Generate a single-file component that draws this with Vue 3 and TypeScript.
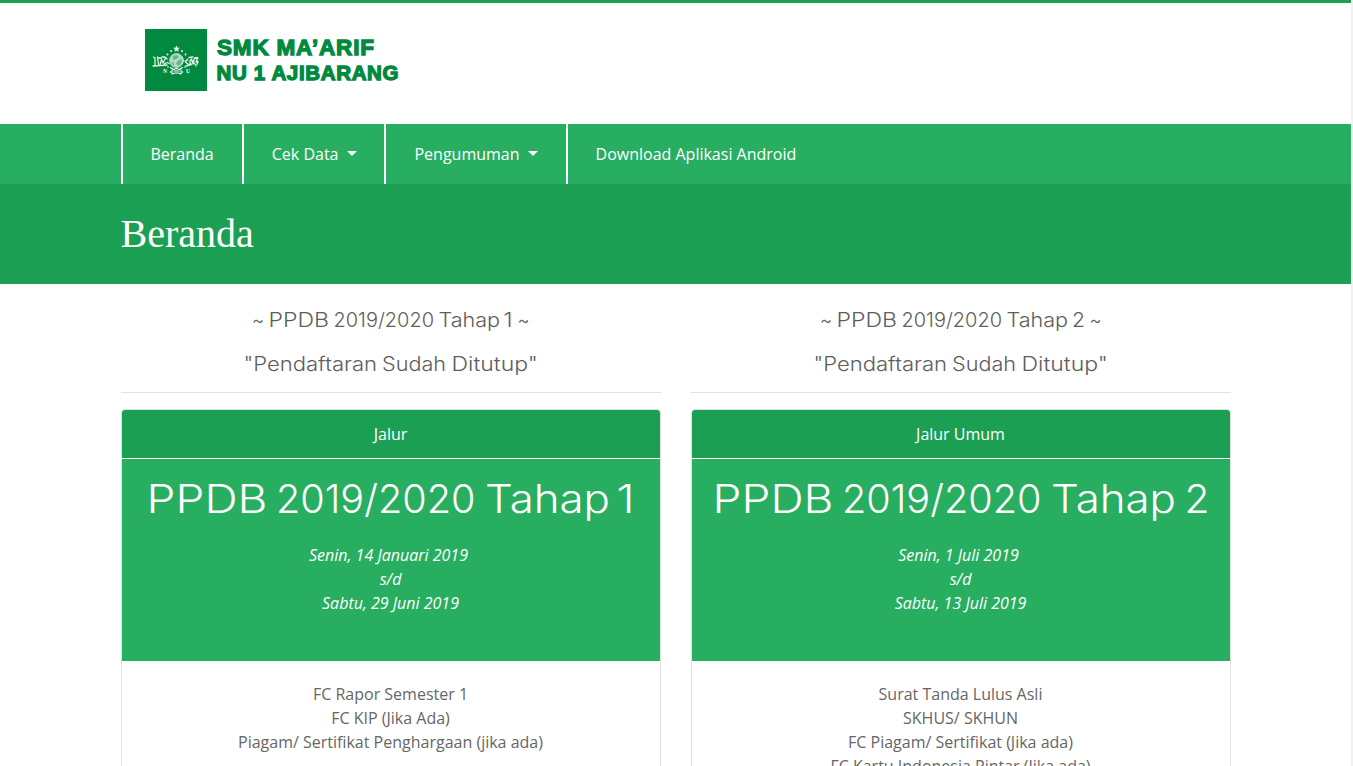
<script setup lang="ts">
interface Word { text: string; x: number; width: number }
interface Track {
  notice: Word[]
  closed: Word[]
  label: string
  title: Word[]
  start: string
  end: string
  requirements: string[]
}

const menu = [
  { label: 'Beranda', dropdown: false },
  { label: 'Cek Data', dropdown: true },
  { label: 'Pengumuman', dropdown: true },
  { label: 'Download Aplikasi Android', dropdown: false },
]

const closed: Word[] = [
  { text: '"Pendaftaran', x: 122.5, width: 133.5 },
  { text: 'Sudah', x: 261, width: 64 },
  { text: 'Ditutup"', x: 330.5, width: 86.5 },
]

const tracks: Track[] = [
  {
    notice: [
      { text: '~', x: 131, width: 12 },
      { text: 'PPDB', x: 147.5, width: 60.5 },
      { text: '2019/2020', x: 212.5, width: 100.5 },
      { text: 'Tahap', x: 317.5, width: 61.5 },
      { text: '1', x: 382.5, width: 9 },
      { text: '~', x: 396.5, width: 12 },
    ],
    closed,
    label: 'Jalur',
    title: [
      { text: 'PPDB', x: 24.5, width: 121 },
      { text: '2019/2020', x: 154, width: 199.5 },
      { text: 'Tahap', x: 363, width: 125 },
      { text: '1', x: 494.5, width: 18 },
    ],
    start: 'Senin, 14 Januari 2019',
    end: 'Sabtu, 29 Juni 2019',
    requirements: ['FC Rapor Semester 1', 'FC KIP (Jika Ada)', 'Piagam/ Sertifikat Penghargaan (jika ada)'],
  },
  {
    notice: [
      { text: '~', x: 129, width: 12 },
      { text: 'PPDB', x: 145.5, width: 60.5 },
      { text: '2019/2020', x: 210.5, width: 100.5 },
      { text: 'Tahap', x: 315.5, width: 61.5 },
      { text: '2', x: 381, width: 13 },
      { text: '~', x: 398.5, width: 12 },
    ],
    closed,
    label: 'Jalur Umum',
    title: [
      { text: 'PPDB', x: 20.5, width: 121 },
      { text: '2019/2020', x: 150, width: 199.5 },
      { text: 'Tahap', x: 359, width: 125 },
      { text: '2', x: 492.5, width: 25 },
    ],
    start: 'Senin, 1 Juli 2019',
    end: 'Sabtu, 13 Juli 2019',
    requirements: ['Surat Tanda Lulus Asli', 'SKHUS/ SKHUN', 'FC Piagam/ Sertifikat (Jika ada)', 'FC Kartu Indonesia Pintar (Jika ada)'],
  },
]
</script>

<template>
  <div class="window">
    <div class="page">
      <header class="masthead">
        <div class="container">
          <svg class="brand" width="300" height="70" viewBox="0 0 300 70">
            <rect width="62" height="62" fill="#00893f" />
            <g fill="#fff">
              <path d="M31.500 16.500l1 2.200 2.300.1-1.800 1.600.6 2.300-2.100-1.300-2.100 1.300.6-2.300-1.800-1.600 2.300-.1z" />
              <circle cx="26" cy="22" r=".9" /><circle cx="37" cy="22" r=".9" />
              <circle cx="22.500" cy="25.500" r=".9" /><circle cx="40.500" cy="25.500" r=".9" />
              <circle cx="23" cy="38" r=".8" /><circle cx="40" cy="38" r=".8" />
              <circle cx="25.500" cy="43" r=".8" /><circle cx="37.500" cy="43" r=".8" />
              <circle cx="31.500" cy="31.500" r="6.500" fill-opacity=".7" />
            </g>
            <g fill="none" stroke="#fff" stroke-linecap="round" stroke-linejoin="round">
              <circle cx="31.500" cy="31.500" r="6.900" stroke-width=".8" />
              <path stroke-width="1.300" stroke-opacity=".88" d="M8.500 28l1.500 1v7l-2 1h4l2-1M12.500 28l1 7M13 29h3l2 5 2.500-5M17 28h3l2 2M16 32l-1 4M19 35l3-1.500 2 1M9 37l13-1M40 32l2.500 3 4 .5-2-3 2-2.500 1.500 5 1.500-6 3 .5-1.500 3.500 2-.5-1 3M41 37l4-1M44 28.500l4-.5M48 32l3 5M51 28.500l2 .5M43 30l-2 2" />
              <path stroke-width="1.100" d="M25.500 38.500l3 2 3-1 3 1 3-2M27 41v4l3-1h3l3 1v-4M29 42h5" />
            </g>
            <path d="M28 27l4-1 2 2-3 2-3 1zM34 31l3-1-1 5-3 2-2-3zM26 33l3 1v3z" fill="#00893f" opacity=".45" />
            <g fill="#fff" font-family="Liberation Serif, serif" font-size="5.500" font-weight="700">
              <text x="18" y="44">N</text><text x="41" y="44">U</text>
            </g>
            <g class="brand-name">
              <text x="72" y="25.500" font-size="22.500" textLength="157" lengthAdjust="spacing">SMK MA’ARIF</text>
              <text x="71.500" y="51" font-size="20.500" textLength="182" lengthAdjust="spacing">NU 1 AJIBARANG</text>
            </g>
          </svg>
        </div>
      </header>
      <nav class="menu">
        <div class="container menu-items">
          <a v-for="item in menu" :key="item.label" class="menu-link">
            {{ item.label }}<span v-if="item.dropdown" class="caret"></span>
          </a>
        </div>
      </nav>
      <section class="banner"><div class="container"><h1>Beranda</h1></div></section>
      <main class="container tracks">
        <section v-for="track in tracks" :key="track.label" class="track">
          <svg class="notice" width="540" height="24">
            <text><tspan v-for="(w, i) in track.notice" :key="i" :x="w.x" y="19" :textLength="w.width" lengthAdjust="spacingAndGlyphs">{{ w.text }}</tspan></text>
          </svg>
          <svg class="notice" width="540" height="24">
            <text><tspan v-for="(w, i) in track.closed" :key="i" :x="w.x" y="19" :textLength="w.width" lengthAdjust="spacingAndGlyphs">{{ w.text }}</tspan></text>
          </svg>
          <hr />
          <article class="card">
            <div class="card-header">{{ track.label }}</div>
            <div class="card-period">
              <svg class="title" width="538" height="48">
                <text><tspan v-for="(w, i) in track.title" :key="i" :x="w.x" y="38" :textLength="w.width" lengthAdjust="spacingAndGlyphs">{{ w.text }}</tspan></text>
              </svg>
              <p><em><span class="start">{{ track.start }}</span><br />s/d<br />{{ track.end }}</em></p>
            </div>
            <ul class="requirements">
              <li v-for="item in track.requirements" :key="item">{{ item }}</li>
            </ul>
          </article>
        </section>
      </main>
    </div>
    <div class="scroll-gutter"></div>
  </div>
</template>

<style>
body { margin: 0; overflow: hidden; }
</style>

<style scoped>
.window {
  display: grid;
  grid-template-columns: minmax(0, 1fr) 2px;
  height: 766px;
  overflow: hidden;
  color: #666;
  background: #fff;
  font: 16px/24px "Open Sans", sans-serif;
}
.page { overflow: hidden; }
.scroll-gutter { background: #f1f1f1; }
.container { width: 1110px; margin: 0 auto; }
.masthead { box-sizing: border-box; height: 124px; padding-top: 26px; border-top: 3px solid #1a9f53; }
.brand { display: block; margin-left: 24.5px; }
.brand-name {
  fill: #00893f;
  stroke: #00893f;
  stroke-width: 1.3;
  font-family: "Liberation Sans", Arial, sans-serif;
  font-weight: 700;
}
.menu { height: 60px; background: #28ae61; }
.menu-items { display: flex; }
.menu-link {
  display: flex;
  align-items: center;
  height: 60px;
  padding: 0 28px;
  border-left: 2px solid #fff;
  color: #fff;
  white-space: nowrap;
}
.caret { margin: -2px -.5px 0 8.5px; border: 5px solid transparent; border-top-color: #fff; border-bottom: 0; }
.banner { height: 100px; background: #1a9f53; color: #fff; }
.banner h1 { margin: 0; padding-top: 26px; font: 400 40px/48px "Liberation Serif", serif; }
.tracks { display: grid; grid-template-columns: 540px 540px; gap: 30px; padding-top: 24px; }
.notice { display: block; margin-bottom: 20px; font: 300 19.4px Inter, sans-serif; fill: #5e5e5e; }
.notice + .notice { margin-bottom: 0; }
hr { height: 1px; margin: 16px 0; border: 0; background: #e2e2e2; }
.card { height: 500px; border: 1px solid #dfdfdf; border-radius: 4px; overflow: hidden; text-align: center; }
.card-header { padding: 12px 0; border-bottom: 1px solid #fff; background: #1a9f53; color: #fff; }
.card-period { box-sizing: border-box; height: 202px; padding-top: 16px; background: #28ae61; color: #fff; }
.title { display: block; font: 300 39px Inter, sans-serif; fill: #fff; }
.card-period p { margin: 20px 0 0; }
.start { margin-right: 4px; }
.requirements { margin: 0; padding: 21px 0 0; list-style: none; }
</style>
